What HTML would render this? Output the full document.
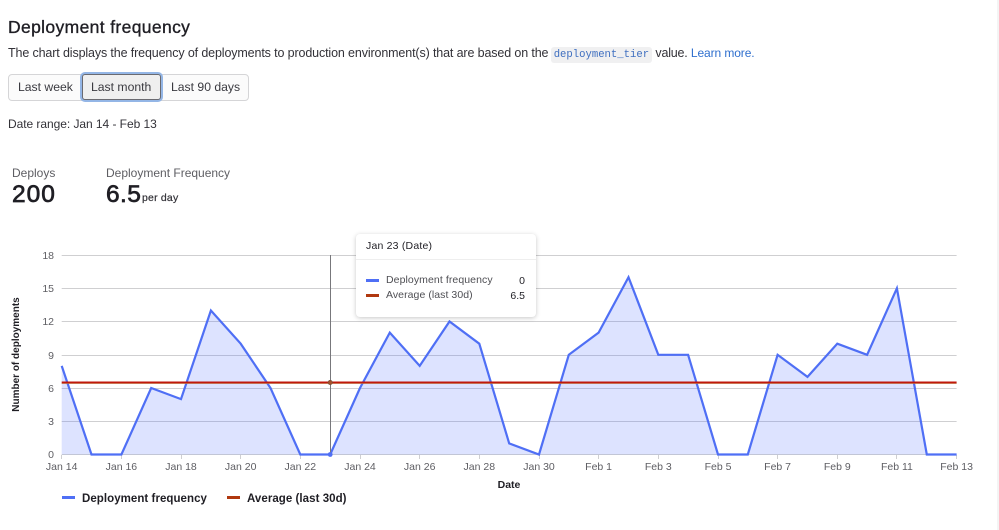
<!DOCTYPE html>
<html lang="en">
<head>
<meta charset="utf-8">
<title>Deployment frequency</title>
<style>
html,body{margin:0;padding:0;background:#fff}
body{width:999px;height:530px;position:relative;overflow:hidden;font-family:"Liberation Sans",Arial,sans-serif;color:#303030}
.a{position:absolute;white-space:nowrap}
h1{margin:0;font-size:17.5px;font-weight:400;color:#1f1e24;left:8px;top:17px;line-height:21px;-webkit-text-stroke:.35px #1f1e24;letter-spacing:.36px}
.desc{left:8px;top:45px;font-size:12.5px;line-height:17px;letter-spacing:-.13px;color:#333238}
code{font-family:"Liberation Mono",monospace;font-size:10.6px;color:#3f6fc0;background:#f0f0f1;border-radius:3px;padding:2px 3px;letter-spacing:0;margin:0 0 0 -1px}
.desc .v{letter-spacing:-.2px}
.desc a{color:#2f6fce;text-decoration:none;font-size:12px;letter-spacing:-.1px}
.btns{left:8px;top:74px;height:27px;width:241px;box-sizing:border-box;border:1px solid #d5d5d7;border-radius:4px;background:#fbfbfb}
.b{font-size:12.2px;letter-spacing:0;color:#3a3a40;top:80px;line-height:15px}
.active{left:82px;top:74px;width:79px;height:26px;box-sizing:border-box;border:1px solid #6a6a70;border-radius:3px;background:#efefef;box-shadow:0 0 0 2px #94b6e6}
.range{left:8px;top:117px;font-size:12px;letter-spacing:-.05px;line-height:15px;color:#333238}
.lab{top:166px;font-size:12px;letter-spacing:0;line-height:15px;color:#5e5e63}
.val{top:181px;font-size:24.5px;line-height:28px;color:#1f1e24;-webkit-text-stroke:.7px #1f1e24;letter-spacing:1px}
.per{left:142px;top:192px;font-size:10.5px;line-height:13px;color:#333238;-webkit-text-stroke:.2px #333238;letter-spacing:.2px}
.strip{left:997px;top:0;width:2px;height:530px;background:#f4f4f4}
svg{position:absolute;left:0;top:0}
.tt{left:356px;top:234px;width:180px;height:83px;background:#fff;border-radius:4px;box-shadow:0 1px 5px rgba(0,0,0,.22)}
.tt .h{position:absolute;left:0;top:0;right:0;height:25px;border-bottom:1px solid #eeeeee}
.tt span{position:absolute;white-space:nowrap;line-height:12px}
.arrow{left:353px;top:273px;width:7px;height:7px;background:#fff;transform:rotate(45deg)}
</style>
</head>
<body>
<h1 class="a">Deployment frequency</h1>
<div class="a desc">The chart displays the frequency of deployments to production environment(s) that are based on the <code>deployment_tier</code> <span class="v">value.</span> <a href="#">Learn more.</a></div>

<div class="a btns"></div>
<div class="a active"></div>
<div class="a b" style="left:18px">Last week</div>
<div class="a b" style="left:91px">Last month</div>
<div class="a b" style="left:171px">Last 90 days</div>

<div class="a range">Date range: Jan 14 - Feb 13</div>

<div class="a lab" style="left:12px">Deploys</div>
<div class="a val" style="left:12px">200</div>
<div class="a lab" style="left:106px">Deployment Frequency</div>
<div class="a val" style="left:106px;letter-spacing:.4px">6.5</div>
<div class="a per">per day</div>

<svg width="999" height="530" viewBox="0 0 999 530" xmlns="http://www.w3.org/2000/svg">
  <g stroke="#cfcfd1" stroke-width="1" fill="none">
    <path d="M61.7 255.5H956.6M61.7 288.5H956.6M61.7 321.5H956.6M61.7 355.5H956.6M61.7 388.5H956.6M61.7 421.5H956.6M61.7 454.5H956.6"/>
    <path d="M61.5 455v4M121.5 455v4M181.5 455v4M240.5 455v4M300.5 455v4M360.5 455v4M419.5 455v4M479.5 455v4M539.5 455v4M598.5 455v4M658.5 455v4M718.5 455v4M777.5 455v4M837.5 455v4M896.5 455v4M956.5 455v4"/>
  </g>
  <path fill="#5772ff" fill-opacity=".2" d="M61.7 454.5V365.9L91.5 454.5H121.4L151.2 388L181 399.1L210.9 310.5L240.7 343.7L270.5 388L300.3 454.5H330.2L360 388L389.8 332.6L419.7 365.9L449.5 321.5L479.3 343.7L509.2 443.4L539 454.5L568.8 354.8L598.6 332.6L628.5 277.2L658.3 354.8H688.1L718 454.5H747.8L777.6 354.8L807.5 376.9L837.3 343.7L867.1 354.8L896.9 288.3L926.8 454.5H956.6Z"/>
  <path fill="none" stroke="#4f6ff5" stroke-width="2.2" stroke-linejoin="miter" d="M61.7 365.9L91.5 454.5H121.4L151.2 388L181 399.1L210.9 310.5L240.7 343.7L270.5 388L300.3 454.5H330.2L360 388L389.8 332.6L419.7 365.9L449.5 321.5L479.3 343.7L509.2 443.4L539 454.5L568.8 354.8L598.6 332.6L628.5 277.2L658.3 354.8H688.1L718 454.5H747.8L777.6 354.8L807.5 376.9L837.3 343.7L867.1 354.8L896.9 288.3L926.8 454.5H956.6"/>
  <path d="M61.7 382.5H956.6" stroke="#c0180c" stroke-width="2" fill="none"/>
  <path d="M61.7 383.6H956.6" stroke="#c08a50" stroke-width=".5" fill="none"/>
  <path d="M330.5 255V455" stroke="#77777b" stroke-width="1" fill="none"/>
  <circle cx="330.2" cy="382.5" r="2.2" fill="#a8502a" stroke="#6d5040" stroke-width=".6"/>
  <circle cx="330.2" cy="454.5" r="2.4" fill="#4f6ff5"/>

  <g font-family="'Liberation Sans',Arial,sans-serif" font-size="10.5" fill="#5e5e63" text-anchor="end">
    <text x="54" y="259">18</text>
    <text x="54" y="292">15</text>
    <text x="54" y="325">12</text>
    <text x="54" y="359">9</text>
    <text x="54" y="392">6</text>
    <text x="54" y="425">3</text>
    <text x="54" y="458">0</text>
  </g>
  <g font-family="'Liberation Sans',Arial,sans-serif" font-size="10.5" fill="#5e5e63" text-anchor="middle">
    <text x="61.7" y="470">Jan 14</text>
    <text x="121.4" y="470">Jan 16</text>
    <text x="181" y="470">Jan 18</text>
    <text x="240.7" y="470">Jan 20</text>
    <text x="300.3" y="470">Jan 22</text>
    <text x="360" y="470">Jan 24</text>
    <text x="419.7" y="470">Jan 26</text>
    <text x="479.3" y="470">Jan 28</text>
    <text x="539" y="470">Jan 30</text>
    <text x="598.6" y="470">Feb 1</text>
    <text x="658.3" y="470">Feb 3</text>
    <text x="718" y="470">Feb 5</text>
    <text x="777.6" y="470">Feb 7</text>
    <text x="837.3" y="470">Feb 9</text>
    <text x="896.9" y="470">Feb 11</text>
    <text x="956.6" y="470">Feb 13</text>
  </g>
  <text x="509" y="488" font-family="'Liberation Sans',Arial,sans-serif" font-size="10.5" font-weight="700" fill="#1f1e24" text-anchor="middle">Date</text>
  <text transform="translate(19 354.5) rotate(-90)" x="0" y="0" font-family="'Liberation Sans',Arial,sans-serif" font-size="10" font-weight="700" fill="#1f1e24" text-anchor="middle">Number of deployments</text>

  <rect x="62" y="496" width="13" height="3" fill="#4f6ff5"/>
  <text x="82" y="502" font-family="'Liberation Sans',Arial,sans-serif" font-size="11.5" font-weight="700" fill="#1f1e24" letter-spacing=".05">Deployment frequency</text>
  <rect x="227" y="496" width="13" height="3" fill="#b0380f"/>
  <text x="247" y="502" font-family="'Liberation Sans',Arial,sans-serif" font-size="11.5" font-weight="700" fill="#1f1e24" letter-spacing=".05">Average (last 30d)</text>
</svg>

<div class="a arrow"></div>
<div class="a tt">
  <div class="h"></div>
  <span style="left:10px;top:6px;font-size:10.5px;color:#1f1e24;letter-spacing:.2px">Jan 23 (Date)</span>
  <i style="position:absolute;left:10px;top:45px;width:13px;height:3px;background:#4f6ff5"></i>
  <span style="left:30px;top:40px;font-size:10.5px;color:#4f4f54;letter-spacing:.08px">Deployment frequency</span>
  <span style="right:11px;top:41px;font-size:10.5px;color:#1f1e24">0</span>
  <i style="position:absolute;left:10px;top:60px;width:13px;height:3px;background:#b0380f"></i>
  <span style="left:30px;top:55px;font-size:10.5px;color:#4f4f54;letter-spacing:.06px">Average (last 30d)</span>
  <span style="right:11px;top:56px;font-size:10.5px;color:#1f1e24">6.5</span>
</div>

<div class="a strip"></div>
</body>
</html>
